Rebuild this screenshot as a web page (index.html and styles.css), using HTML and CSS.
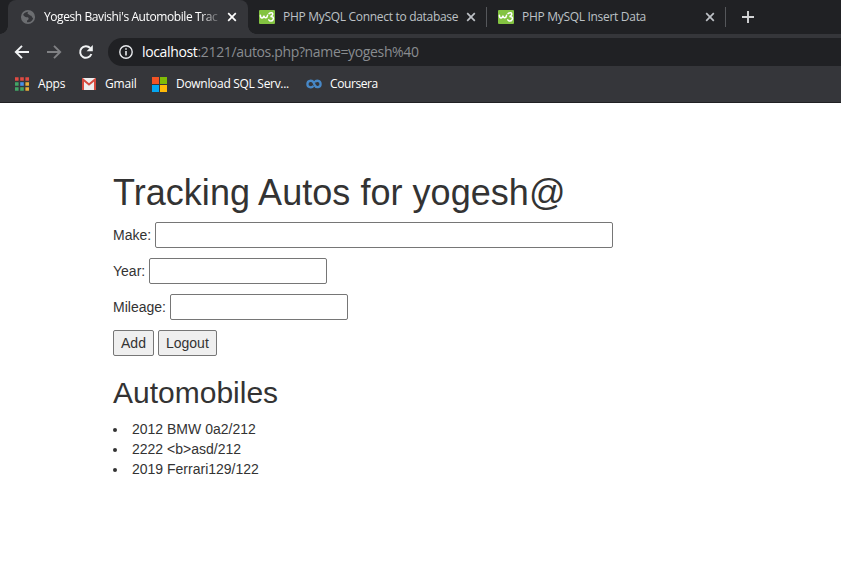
FILE: index.html
```html
<!DOCTYPE html>
<html lang="en">
<head>
<meta charset="utf-8">
<title>Yogesh Bavishi's Automobile Tracker</title>
<link rel="stylesheet" href="styles.css">
</head>
<body>
<svg class="defs" width="0" height="0">
  <symbol id="w3" viewBox="0 0 16 14"><rect width="16" height="14" rx="1" fill="#83c341"/><path d="M1.4 5.2C1.4 8.8 4.4 8.8 4.9 5.6C5.2 8.8 8.2 8.4 8.6 5.2M10 3.6C12 2 14.4 2.8 13.6 4.7C13.2 5.8 12.2 6.2 11.4 6.4C14 6.2 15 7.8 14.1 9.6C13.1 11.6 10.8 11.4 9.8 9.8" fill="none" stroke="#fff" stroke-width="1.5" stroke-linecap="round"/></symbol>
  <symbol id="close" viewBox="0 0 10 10"><path d="M1.2 1.2L8.8 8.8M8.8 1.2L1.2 8.8" fill="none" stroke="currentColor" stroke-width="1.7"/></symbol>
</svg>
<header class="browser">
  <div class="tabs">
    <div class="tab active">
      <svg class="favicon globe" viewBox="0 0 16 16"><circle cx="8" cy="8" r="6.2" fill="none" stroke="#6c6e71" stroke-width="1.7"/><path d="M2 6C4 5 4 9 7 8.2C9.4 8 9 11 7 11.5L7 14C4 14 1.6 11 2 6ZM9 2C7 4 7 5 9 5.5C10 7 12 6 12 8.5L14 9C14.5 5 12 2 9 2Z" fill="#6c6e71"/></svg>
      <span class="title t1">Yogesh Bavishi's Automobile Trac</span>
      <svg class="close"><use href="#close"/></svg>
    </div>
    <div class="tab">
      <svg class="favicon"><use href="#w3"/></svg>
      <span class="title t2">PHP MySQL Connect to database</span>
      <svg class="close"><use href="#close"/></svg>
    </div>
    <div class="tab">
      <svg class="favicon"><use href="#w3"/></svg>
      <span class="title t3">PHP MySQL Insert Data</span>
      <svg class="close"><use href="#close"/></svg>
    </div>
    <svg class="plus" viewBox="0 0 12 12"><path d="M6 0V12M0 6H12" stroke="#d3d4d6" stroke-width="1.9"/></svg>
  </div>
  <div class="toolbar">
    <svg class="nav" viewBox="0 0 16 16"><path d="M15 8H2.4M8 1.8L1.8 8L8 14.2" fill="none" stroke="#f1f3f4" stroke-width="1.9"/></svg>
    <svg class="nav" viewBox="0 0 16 16"><path d="M1 8H13.6M8 1.8L14.2 8L8 14.2" fill="none" stroke="#808184" stroke-width="1.9"/></svg>
    <svg class="nav" viewBox="0 0 16 16"><path d="M13.4 10A5.8 5.8 0 1 1 12.2 4" fill="none" stroke="#f1f3f4" stroke-width="2"/><path d="M14.8 1V7.2H8.6Z" fill="#f1f3f4"/></svg>
    <div class="address">
      <svg class="info" viewBox="0 0 14 14"><circle cx="7" cy="7" r="6.2" fill="none" stroke="#e8eaed" stroke-width="1.4"/><path d="M7 6V10.5M7 3.3V4.8" stroke="#e8eaed" stroke-width="1.6"/></svg>
      <span class="url"><b>localhost</b>:2121/autos.php?name=yogesh%40</span>
    </div>
  </div>
  <nav class="bookmarks">
    <span class="mark apps"><svg width="14" height="14" viewBox="0 0 14 14"><path d="M0 2H14" stroke="#df4b43" stroke-width="3.6" stroke-dasharray="3.6 1.6"/><path d="M0 7H3.6M0 12H3.6" stroke="#42a566" stroke-width="3.6"/><path d="M5.2 7H8.8" stroke="#4a90e8" stroke-width="3.6"/><path d="M10.4 7H14M10.4 12H14" stroke="#e8ad3b" stroke-width="3.6"/><path d="M5.2 12H8.8" stroke="#42a566" stroke-width="3.6"/></svg><span>Apps</span></span>
    <span class="mark gmail"><svg width="14" height="12" viewBox="0 0 14 12"><rect width="14" height="12" rx="1" fill="#eee"/><path d="M1 12V1.5L7 6.5L13 1.5V12" fill="none" stroke="#d54b3f" stroke-width="2"/></svg><span>Gmail</span></span>
    <span class="mark download"><svg width="15" height="15" viewBox="0 0 15 15"><path d="M0 0H7V7H0Z" fill="#f35325"/><path d="M8 0H15V7H8Z" fill="#81bc06"/><path d="M0 8H7V15H0Z" fill="#05a6f0"/><path d="M8 8H15V15H8Z" fill="#ffba08"/></svg><span class="long">Download SQL Serv...</span></span>
    <span class="mark coursera"><svg width="16" height="10" viewBox="0 0 16 10"><path d="M7.4 6.8C6 9.2 1.4 8.8 1.4 5C1.4 1.2 6.2.8 7.6 3.6L8.6 6C10 9.2 14.6 8.6 14.6 5C14.6 1.4 10.2.8 8.8 3.2" fill="none" stroke="#4788c7" stroke-width="2.3"/></svg><span>Coursera</span></span>
  </nav>
</header>
<main class="container">
  <h1>Tracking Autos for yogesh@</h1>
  <form>
    <p><label for="make">Make:</label> <input class="wide" type="text" id="make"></p>
    <p><label for="year">Year:</label> <input type="text" id="year"></p>
    <p><label for="mileage">Mileage:</label> <input type="text" id="mileage"></p>
    <button class="add" type="button">Add</button> <button class="logout" type="button">Logout</button>
  </form>
  <h2>Automobiles</h2>
  <ul>
    <li>2012 BMW 0a2/212</li>
    <li>2222 &lt;b&gt;asd/212</li>
    <li>2019 Ferrari129/122</li>
  </ul>
</main>
</body>
</html>
```
FILE: styles.css
```css
* { box-sizing: border-box; }
body { margin: 0; background: #fff; color: #333; font: 14px/20px "Liberation Sans", Arial, sans-serif; overflow: hidden; }
svg { display: block; flex: none; }
.defs { position: absolute; }
.browser { height: 103px; background: #35363a; border-bottom: 1px solid #202124; font-family: "Open Sans", "Noto Sans", sans-serif; }
.tabs { display: flex; height: 34px; padding-left: 8px; background: #202124; }
.tab { display: flex; align-items: center; width: 239px; height: 34px; padding: 0 11px 0 12px; color: #bdc1c6; position: relative; }
.tab.active { width: 240px; background: #35363a; border-radius: 8px 8px 0 0; color: #fff; }
.tab.active::before, .tab.active::after { content: ""; position: absolute; bottom: 0; width: 8px; height: 8px; }
.tab.active::before { left: -8px; background: radial-gradient(circle at 0 0, #202124 7.5px, #35363a 8px); }
.tab.active::after { right: -8px; background: radial-gradient(circle at 100% 0, #202124 7.5px, #35363a 8px); }
.tab:not(.active)::after { content: ""; position: absolute; right: 0; top: 7px; width: 1px; height: 20px; background: #55575b; }
.favicon { width: 16px; height: 14px; margin-right: 8px; }
.tab:not(.active) .favicon { margin-left: -1px; }
.globe { height: 16px; }
.title { flex: 1; overflow: hidden; white-space: nowrap; font-size: 12px; line-height: 18px; }
.t1 { letter-spacing: -.41px; margin-right: 8px; -webkit-mask-image: linear-gradient(90deg, #000 157px, transparent 178px); mask-image: linear-gradient(90deg, #000 157px, transparent 178px); }
.t2 { letter-spacing: -.3px; }
.t3 { letter-spacing: -.3px; }
.close { width: 10px; height: 10px; }
.plus { width: 12px; height: 12px; margin: 11px 0 0 16px; }
.toolbar { display: flex; align-items: center; height: 36px; padding-left: 14px; }
.nav { width: 16px; height: 16px; margin-right: 16px; }
.nav + .nav + .nav { margin-right: 14px; }
.address { display: flex; align-items: center; flex: 1; height: 28px; padding-left: 11px; background: #202124; border-radius: 14px 0 0 14px; }
.info { width: 14px; height: 14px; margin-right: 9px; }
.url { font-size: 14px; letter-spacing: -.35px; color: #898c90; white-space: nowrap; }
.url b { font-weight: 400; color: #fff; }
.bookmarks { display: flex; align-items: center; height: 28px; padding-left: 15px; color: #fff; font-size: 12px; line-height: 18px; }
.mark { display: flex; align-items: center; white-space: nowrap; letter-spacing: -.2px; }
.long { letter-spacing: -.3px; }
.apps { width: 67px; gap: 9px; }
.gmail { width: 70px; gap: 9px; }
.download { width: 154px; gap: 9px; }
.coursera { gap: 8px; }
.coursera > span { letter-spacing: -.4px; }
.container { padding: 70px 0 0 113px; }
h1, h2 { margin: 0 0 10px; font-weight: 500; line-height: 1.1; }
h1 { margin-bottom: 9px; font-size: 36px; letter-spacing: .04px; }
h2 { margin-top: 20px; font-size: 30px; }
p { margin: 0 0 10px; }
input, button { height: 26px; font: inherit; color: inherit; border: 1px solid #767676; border-radius: 2px; }
input { width: 178px; background: #fff; }
.wide { width: 458px; }
button { padding: 0; background: #efefef; }
.add { width: 41px; }
.logout { width: 59px; }
ul { margin: 0; padding: 0; list-style-position: inside; }
```
